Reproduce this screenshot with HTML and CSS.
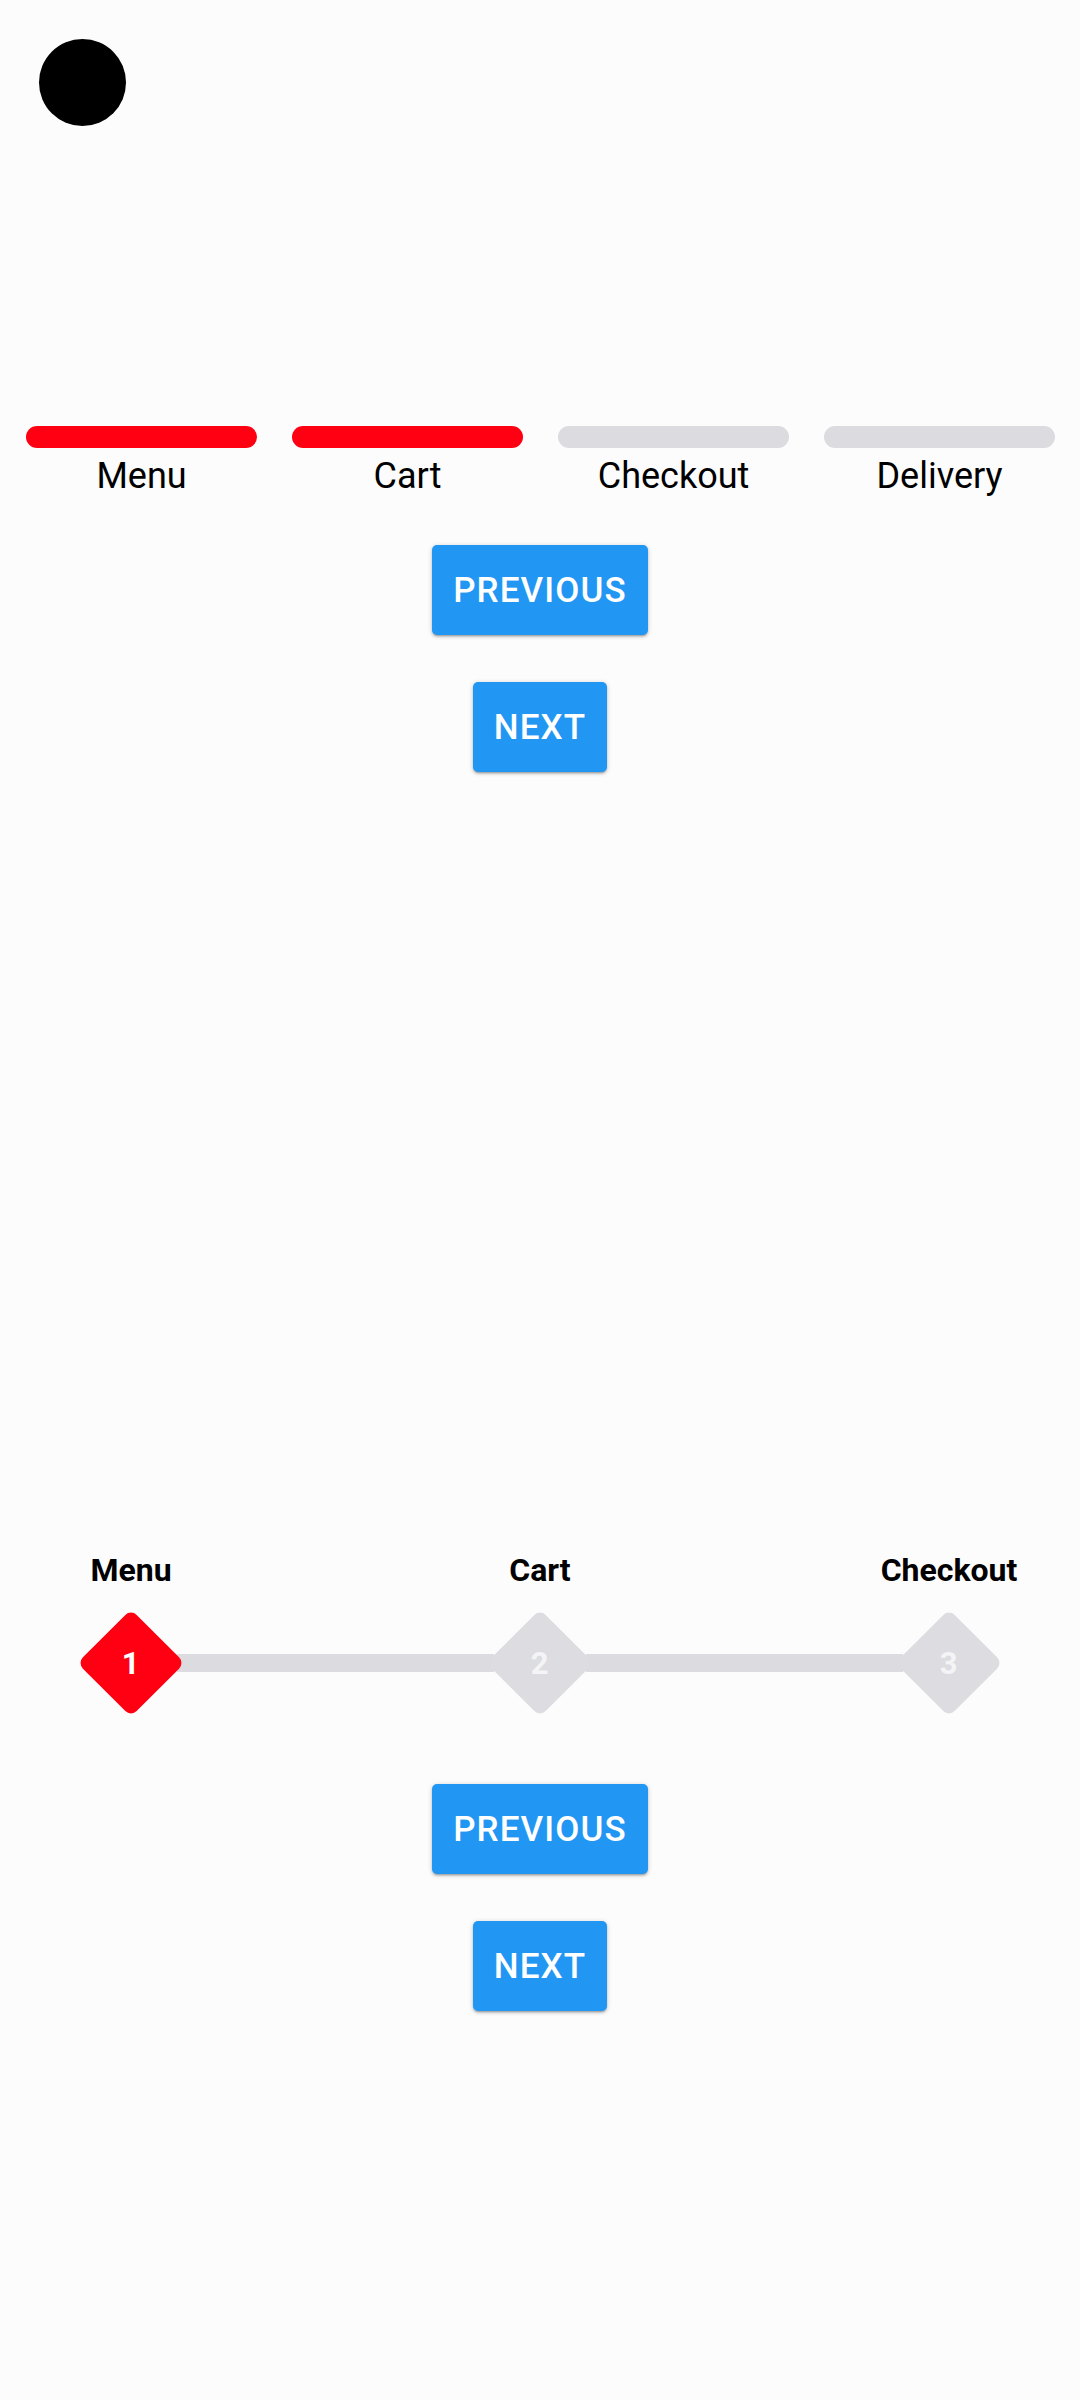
FILE: index.html
```html
<!DOCTYPE html>
<html>
<head>
<meta charset="utf-8">
<link rel="stylesheet" href="styles.css">
</head>
<body>
<div class="screen">
  <div class="avatar"></div>

  <section class="progress">
    <div class="bar bar-done"></div>
    <div class="bar bar-done"></div>
    <div class="bar bar-todo"></div>
    <div class="bar bar-todo"></div>
    <div class="plabel">Menu</div>
    <div class="plabel">Cart</div>
    <div class="plabel">Checkout</div>
    <div class="plabel">Delivery</div>
  </section>

  <div class="actions actions-top">
    <button class="btn">PREVIOUS</button>
    <button class="btn">NEXT</button>
  </div>

  <section class="stepper">
    <div class="slabel s1">Menu</div>
    <div class="slabel s2">Cart</div>
    <div class="slabel s3">Checkout</div>
    <div class="node"><div class="diamond diamond-active"><span>1</span></div></div>
    <div class="connector"></div>
    <div class="node"><div class="diamond diamond-idle"><span>2</span></div></div>
    <div class="connector"></div>
    <div class="node"><div class="diamond diamond-idle"><span>3</span></div></div>
  </section>

  <div class="actions actions-bottom">
    <button class="btn">PREVIOUS</button>
    <button class="btn">NEXT</button>
  </div>
</div>
</body>
</html>
```
FILE: styles.css
```css
html, body {
  margin: 0;
  padding: 0;
  background: #fcfcfd;
}
body {
  font-family: Roboto, "Noto Sans", "Liberation Sans", sans-serif;
  color: #000;
  width: 1080px;
  height: 2400px;
  overflow: hidden;
}
.screen {
  display: flex;
  flex-direction: column;
}
.avatar {
  width: 87px;
  height: 87px;
  border-radius: 50%;
  background: #000;
  margin: 39px 0 0 39px;
}

/* Top progress */
.progress {
  display: grid;
  grid-template-columns: repeat(4, 1fr);
  column-gap: 35px;
  padding: 0 25px 0 26px;
  margin-top: 300px;
}
.bar {
  height: 22px;
  border-radius: 11px;
}
.bar-done {
  background: #ff0012;
}
.bar-todo {
  background: #dcdbe0;
}
.plabel {
  display: flex;
  justify-content: center;
  white-space: nowrap;
  font-size: 36px;
  line-height: 42px;
  margin-top: 7px;
}

/* Buttons */
.actions {
  display: flex;
  flex-direction: column;
  align-items: center;
  gap: 47px;
}
.actions-top {
  margin-top: 48px;
}
.actions-bottom {
  margin-top: 71px;
}
.btn {
  height: 90px;
  padding: 0 21px;
  border: none;
  border-radius: 5px;
  background: #2196f3;
  color: #fff;
  font-family: Roboto, "Noto Sans", sans-serif;
  font-weight: 500;
  font-size: 35px;
  letter-spacing: 1.1px;
  box-shadow: 0 2px 2px rgba(0,0,0,0.14), 0 3px 1px -2px rgba(0,0,0,0.12), 0 1px 5px rgba(0,0,0,0.2);
}

/* Bottom stepper */
.stepper {
  display: grid;
  grid-template-columns: 100px 309px 100px 309px 100px;
  grid-template-rows: auto 100px;
  row-gap: 23px;
  margin: 779px 0 0 81px;
}
.slabel {
  display: flex;
  justify-content: center;
  white-space: nowrap;
  font-size: 32px;
  font-weight: 700;
  line-height: 39px;
}
.s1 { grid-column: 1; }
.s2 { grid-column: 3; }
.s3 { grid-column: 5; }
.node {
  display: flex;
  align-items: center;
  justify-content: center;
  grid-row: 2;
}
.connector {
  grid-row: 2;
  align-self: center;
  height: 18px;
  background: #dcdbe0;
  margin: 0 -4px;
}
.diamond {
  width: 76px;
  height: 76px;
  border-radius: 8px;
  transform: rotate(45deg);
  display: flex;
  align-items: center;
  justify-content: center;
}
.diamond span {
  transform: rotate(-45deg);
  font-size: 31px;
  font-weight: 700;
  color: #fff;
}
.diamond-active {
  background: #ff0012;
}
.diamond-idle {
  background: #dddce0;
}
.diamond-idle span {
  color: #f4f4f6;
}
```
